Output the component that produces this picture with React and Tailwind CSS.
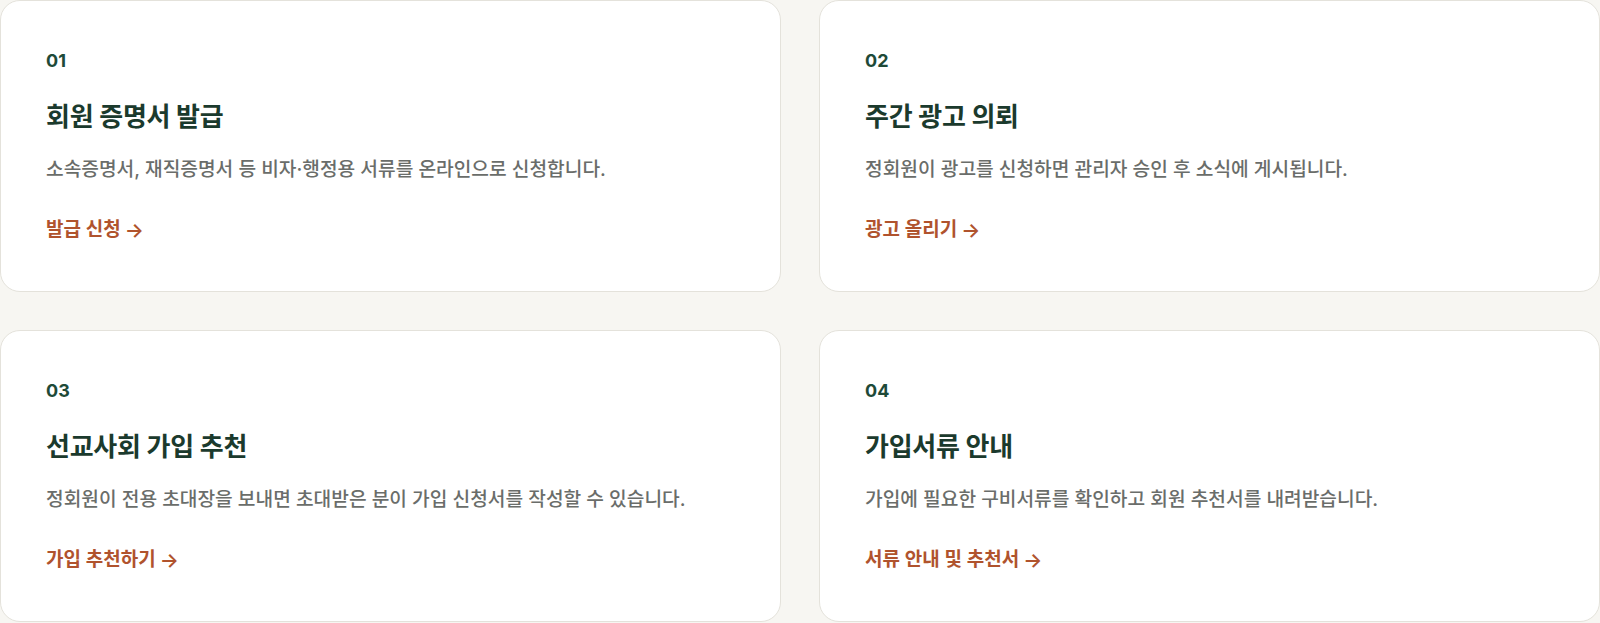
import React from "react";

const items = [
  {
    no: "01",
    title: "회원 증명서 발급",
    desc: "소속증명서, 재직증명서 등 비자·행정용 서류를 온라인으로 신청합니다.",
    link: "발급 신청",
  },
  {
    no: "02",
    title: "주간 광고 의뢰",
    desc: "정회원이 광고를 신청하면 관리자 승인 후 소식에 게시됩니다.",
    link: "광고 올리기",
  },
  {
    no: "03",
    title: "선교사회 가입 추천",
    desc: "정회원이 전용 초대장을 보내면 초대받은 분이 가입 신청서를 작성할 수 있습니다.",
    link: "가입 추천하기",
  },
  {
    no: "04",
    title: "가입서류 안내",
    desc: "가입에 필요한 구비서류를 확인하고 회원 추천서를 내려받습니다.",
    link: "서류 안내 및 추천서",
  },
];

function ServiceCard({ no, title, desc, link }) {
  return (
    <div className="h-[292px] rounded-[20px] border border-[#e4e2db] bg-white px-[45px] pt-[50px]">
      <div className="text-[18px] leading-[20px] font-bold text-[#1e4a38]">{no}</div>
      <h3 className="mt-[29px] text-[26px] leading-[34px] font-bold tracking-[-0.01em] text-[#1b3a2d]">
        {title}
      </h3>
      <p className="mt-[21px] text-[19.2px] leading-[28px] font-medium text-[#6a6d6a]">{desc}</p>
      <a className="mt-[35px] flex items-center gap-[4px] text-[19px] leading-[24px] font-semibold text-[#b0532d]">
        <span>{link}</span>
        <span className="text-[20px] leading-[24px]">→</span>
      </a>
    </div>
  );
}

export default function App() {
  return (
    <div
      className="min-h-[623px] bg-[#f7f6f2]"
      style={{ fontFamily: 'Inter, "Noto Sans CJK KR", sans-serif' }}
    >
      <div className="grid grid-cols-2 gap-[38px]">
        {items.map((it) => (
          <ServiceCard key={it.no} {...it} />
        ))}
      </div>
    </div>
  );
}
